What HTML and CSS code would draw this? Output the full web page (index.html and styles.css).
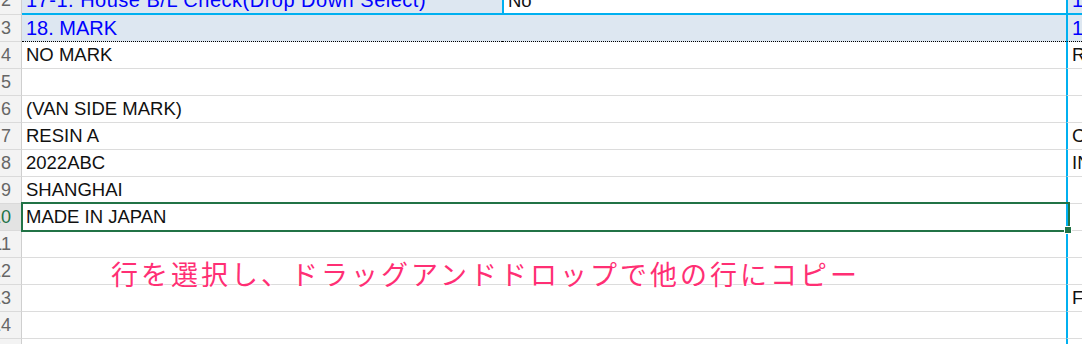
FILE: index.html
```html
<!DOCTYPE html>
<html lang="ja">
<head>
<meta charset="utf-8">
<title>Sheet</title>
<link rel="stylesheet" href="styles.css">
</head>
<body>
<div class="sheet">
  <div class="row row-title row-2">
    <div class="rh">2</div>
    <div class="cell head wide">17-1. House B/L Check(Drop Down Select)</div>
    <div class="cell answer">No</div>
    <div class="cell next head">1</div>
  </div>
  <div class="row row-title row-3">
    <div class="rh">3</div>
    <div class="cell head">18. MARK</div>
    <div class="cell"></div>
    <div class="cell next head">1</div>
  </div>
  <div class="row"><div class="rh">4</div><div class="cell">NO MARK</div><div class="cell"></div><div class="cell next">R</div></div>
  <div class="row"><div class="rh">5</div><div class="cell"></div><div class="cell"></div><div class="cell next"></div></div>
  <div class="row"><div class="rh">6</div><div class="cell">(VAN SIDE MARK)</div><div class="cell"></div><div class="cell next"></div></div>
  <div class="row"><div class="rh">7</div><div class="cell">RESIN A</div><div class="cell"></div><div class="cell next">C</div></div>
  <div class="row"><div class="rh">8</div><div class="cell">2022ABC</div><div class="cell"></div><div class="cell next">IN</div></div>
  <div class="row"><div class="rh">9</div><div class="cell">SHANGHAI</div><div class="cell"></div><div class="cell next"></div></div>
  <div class="row selected">
    <div class="rh">10</div><div class="cell">MADE IN JAPAN</div><div class="cell"></div><div class="cell next"></div>
    <div class="selection"></div>
    <div class="fill-handle"></div>
  </div>
  <div class="row"><div class="rh">11</div><div class="cell"></div><div class="cell"></div><div class="cell next"></div></div>
  <div class="row"><div class="rh">12</div><div class="cell"></div><div class="cell"></div><div class="cell next"></div></div>
  <div class="row"><div class="rh">13</div><div class="cell"></div><div class="cell"></div><div class="cell next">F</div></div>
  <div class="row"><div class="rh">14</div><div class="cell"></div><div class="cell"></div><div class="cell next"></div></div>
  <div class="row"><div class="rh">15</div><div class="cell"></div><div class="cell"></div><div class="cell next"></div></div>

  <div class="callout">行を選択し、ドラッグアンドドロップで他の行にコピー</div>
</div>
</body>
</html>
```

FILE: styles.css
```css
* { box-sizing: border-box; }

html, body {
  margin: 0;
  padding: 0;
  overflow: hidden;
  background: #ffffff;
}

body {
  width: 1082px;
  height: 344px;
  font-family: "Liberation Sans", Arial, sans-serif;
}

.sheet {
  position: relative;
  margin-top: -12px;
}

.row {
  display: grid;
  grid-template-columns: 22px 480px 564px 1fr;
  height: 27px;
}

.rh {
  display: flex;
  justify-content: flex-end;
  overflow: hidden;
  white-space: nowrap;
  padding-right: 10px;
  background: #f3f3f3;
  border-right: 1px solid #cfcfcf;
  border-bottom: 1px solid #dadada;
  font-size: 18px;
  line-height: 26px;
  color: #666666;
}

.cell {
  overflow: hidden;
  white-space: nowrap;
  padding-left: 4px;
  border-bottom: 1px solid #dcdcdc;
  font-size: 18.5px;
  line-height: 26px;
  color: #111111;
}

.cell.next {
  border-left: 2px solid #00b0f0;
  padding-left: 4px;
}

.cell.head {
  font-size: 20px;
  color: #0000ff;
}

.cell.head.wide {
  letter-spacing: 0.5px;
}

.row-title .cell {
  background: #dde7f1;
}

.row-2 .cell {
  border-bottom: 2px solid #00b0f0;
  line-height: 25px;
}

.row-2 .rh {
  line-height: 25px;
}

.row-2 .cell.answer {
  background: #ffffff;
  border-left: 2px solid #00b0f0;
  padding-left: 4px;
}

.row-3 .cell {
  border-bottom: 1px dotted #000000;
}

.selected {
  position: relative;
}

.selected .rh {
  background: #e3e3e3;
  color: #217346;
}

.selection {
  position: absolute;
  left: 21px;
  top: -2px;
  width: 1049px;
  height: 30px;
  border: 2px solid #217346;
  pointer-events: none;
}

.fill-handle {
  position: absolute;
  left: 1064px;
  top: 22px;
  width: 8px;
  height: 8px;
  background: #217346;
  border: 1px solid #ffffff;
}

.callout {
  position: absolute;
  left: 111px;
  top: 272px;
  font-family: "Noto Sans CJK JP", sans-serif;
  font-size: 27px;
  line-height: 27px;
  letter-spacing: 3px;
  color: #ff2f74;
  white-space: nowrap;
  text-shadow: 0 0 2px #ffffff, 0 0 2px #ffffff, 0 0 3px #ffffff;
}
```
